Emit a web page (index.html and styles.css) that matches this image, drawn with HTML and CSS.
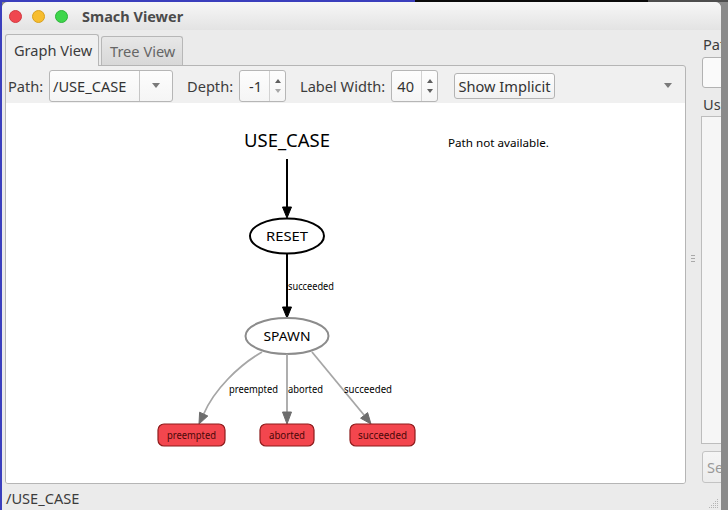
FILE: index.html
```html
<!DOCTYPE html>
<html>
<head>
<meta charset="utf-8">
<title>Smach Viewer</title>
<link rel="stylesheet" href="styles.css">
</head>
<body>
<div class="window">
  <div class="titlebar">
    <span class="light close"></span>
    <span class="light min"></span>
    <span class="light max"></span>
    <span class="title">Smach Viewer</span>
  </div>
  <div class="main">
    <div class="tabwidget">
      <div class="tabbar">
        <div class="tab active">Graph View</div>
        <div class="tab inactive">Tree View</div>
      </div>
      <div class="pane">
        <div class="toolbar">
          <span class="lbl lbl-path">Path:</span>
          <div class="combo">
            <span class="combo-text">/USE_CASE</span>
            <span class="combo-btn"><span class="tri-down"></span></span>
          </div>
          <span class="lbl lbl-depth">Depth:</span>
          <div class="spin">
            <span class="spin-text">-1</span>
            <span class="spin-arrows"><span class="tri-up"></span><span class="tri-dn dim"></span></span>
          </div>
          <span class="lbl lbl-width">Label Width:</span>
          <div class="spin">
            <span class="spin-text">40</span>
            <span class="spin-arrows"><span class="tri-up"></span><span class="tri-dn"></span></span>
          </div>
          <div class="btn-implicit">Show Implicit</div>
          <span class="tri-down tb-arrow"></span>
        </div>
        <div class="graph">
          <svg class="graph-svg" width="679" height="380" viewBox="6 103 679 380" xmlns="http://www.w3.org/2000/svg">
            <text x="287" y="147" text-anchor="middle" font-size="18" textLength="86" lengthAdjust="spacingAndGlyphs" class="g-text">USE_CASE</text>
            <text x="448" y="147" font-size="11.5" textLength="101" lengthAdjust="spacingAndGlyphs" class="g-text">Path not available.</text>

            <line x1="287" y1="159" x2="287" y2="208" stroke="#000" stroke-width="2"/>
            <polygon points="282.5,207 291.5,207 287,218" fill="#000" stroke="#000" stroke-width="1"/>

            <ellipse cx="287" cy="236" rx="37" ry="17.5" fill="#fff" stroke="#000" stroke-width="2"/>
            <text x="287" y="241" text-anchor="middle" font-size="13" textLength="42" lengthAdjust="spacingAndGlyphs" class="g-text">RESET</text>

            <line x1="287" y1="254" x2="287" y2="308" stroke="#000" stroke-width="2"/>
            <polygon points="282.5,307 291.5,307 287,318" fill="#000" stroke="#000" stroke-width="1"/>
            <text x="288" y="290" font-size="10" textLength="46" lengthAdjust="spacingAndGlyphs" class="g-text">succeeded</text>

            <ellipse cx="287" cy="336" rx="41.5" ry="18" fill="#fff" stroke="#8c8c8c" stroke-width="2"/>
            <text x="287" y="341" text-anchor="middle" font-size="13" textLength="47" lengthAdjust="spacingAndGlyphs" class="g-text">SPAWN</text>

            <path d="M262,352 C238,366 214,390 203.7,414" fill="none" stroke="#a6a6a6" stroke-width="1.8"/>
            <polygon points="199,424 207.8,416 199.6,412.2" fill="#6d6d6d" stroke="#6d6d6d" stroke-width="1"/>
            <text x="229" y="393" font-size="10" textLength="49" lengthAdjust="spacingAndGlyphs" class="g-text">preempted</text>

            <line x1="287" y1="354" x2="287" y2="413" stroke="#a6a6a6" stroke-width="1.8"/>
            <polygon points="282.5,412 291.5,412 287,424" fill="#6d6d6d" stroke="#6d6d6d" stroke-width="1"/>
            <text x="288" y="393" font-size="10" textLength="35" lengthAdjust="spacingAndGlyphs" class="g-text">aborted</text>

            <line x1="312" y1="352" x2="364" y2="415" stroke="#a6a6a6" stroke-width="1.8"/>
            <polygon points="371,424 367.6,412.6 360.6,418.2" fill="#6d6d6d" stroke="#6d6d6d" stroke-width="1"/>
            <text x="344" y="393" font-size="10" textLength="48" lengthAdjust="spacingAndGlyphs" class="g-text">succeeded</text>

            <rect x="158" y="424" width="67" height="22" rx="6" fill="#f3464e" stroke="#8e1b1b" stroke-width="1.2"/>
            <text x="191.5" y="439" text-anchor="middle" font-size="10" textLength="49" lengthAdjust="spacingAndGlyphs" class="g-box-text">preempted</text>
            <rect x="260" y="424" width="54" height="22" rx="6" fill="#f3464e" stroke="#8e1b1b" stroke-width="1.2"/>
            <text x="287" y="439" text-anchor="middle" font-size="10" textLength="36" lengthAdjust="spacingAndGlyphs" class="g-box-text">aborted</text>
            <rect x="350" y="424" width="65" height="22" rx="6" fill="#f3464e" stroke="#8e1b1b" stroke-width="1.2"/>
            <text x="382.5" y="439" text-anchor="middle" font-size="10" textLength="49" lengthAdjust="spacingAndGlyphs" class="g-box-text">succeeded</text>
          </svg>
        </div>
      </div>
    </div>
    <div class="splitter"><span class="grip"></span></div>
    <div class="side">
      <div class="side-label">Path:</div>
      <div class="side-field"></div>
      <div class="side-label side-label-2">UserData:</div>
      <div class="side-area"></div>
      <div class="side-btn">Set as initial state</div>
    </div>
  </div>
  <div class="statusbar">
    <span class="status-text">/USE_CASE</span>
    <svg class="size-grip" width="10" height="10" viewBox="0 0 10 10" xmlns="http://www.w3.org/2000/svg">
      <g fill="#b4b4b4">
        <rect x="8" y="0" width="1" height="1"/>
        <rect x="6" y="2" width="1" height="1"/><rect x="8" y="2" width="1" height="1"/>
        <rect x="4" y="4" width="1" height="1"/><rect x="6" y="4" width="1" height="1"/><rect x="8" y="4" width="1" height="1"/>
        <rect x="2" y="6" width="1" height="1"/><rect x="4" y="6" width="1" height="1"/><rect x="6" y="6" width="1" height="1"/><rect x="8" y="6" width="1" height="1"/>
        <rect x="0" y="8" width="1" height="1"/><rect x="2" y="8" width="1" height="1"/><rect x="4" y="8" width="1" height="1"/><rect x="6" y="8" width="1" height="1"/><rect x="8" y="8" width="1" height="1"/>
      </g>
    </svg>
  </div>
</div>
</body>
</html>
```

FILE: styles.css
```css
html, body {
  margin: 0;
  padding: 0;
}

body {
  width: 728px;
  height: 510px;
  overflow: hidden;
  font-family: "Noto Sans", "DejaVu Sans", sans-serif;
  background:
    linear-gradient(to right, #3b3fbd 0 415px, #0b0b0b 415px 648px, #4e4e4e 648px) top left / 100% 2px no-repeat,
    linear-gradient(to right, #3b3fbd 0 2px, #8a8a8a 2px);
}

.window {
  margin: 2px 0 0 2px;
  width: 719px;
  height: 508px;
  background: #ebebeb;
  border-radius: 6px 6px 0 0;
  overflow: hidden;
  display: flex;
  flex-direction: column;
  color: #3c3c3c;
  font-size: 14.6px;
}

/* Title bar */
.titlebar {
  height: 28px;
  flex: none;
  display: flex;
  align-items: center;
  gap: 10px;
  padding-left: 7px;
  background: linear-gradient(#f7f7f7, #e3e3e3);
}

.light {
  width: 13px;
  height: 13px;
  border-radius: 50%;
  box-sizing: border-box;
  flex: none;
}

.close { background: #f0474f; border: 1px solid #d23a41; }
.min { background: #f7bd2e; border: 1px solid #d8a01d; }
.max { background: #3ed64b; border: 1px solid #2db33a; }

.title {
  margin-left: 4px;
  font-weight: bold;
  font-size: 14.5px;
  color: #4b4b4b;
}

/* Main area */
.main {
  flex: 1;
  display: flex;
  min-height: 0;
}

.tabwidget {
  margin-left: 3px;
  width: 681px;
  flex: none;
  display: flex;
  flex-direction: column;
  padding-top: 4px;
  padding-bottom: 2px;
  box-sizing: border-box;
}

.tabbar {
  height: 31px;
  flex: none;
  display: flex;
  align-items: flex-end;
  gap: 2px;
  position: relative;
  z-index: 1;
}

.tab {
  box-sizing: border-box;
  border: 1px solid #b7b7b7;
  border-bottom: none;
  border-radius: 3px 3px 0 0;
  white-space: nowrap;
}

.tab.active {
  width: 94px;
  height: 32px;
  margin-bottom: -1px;
  padding-left: 8px;
  background: #f0f0f0;
  line-height: 30px;
  color: #3c3c3c;
}

.tab.inactive {
  width: 82px;
  height: 29px;
  padding-left: 8px;
  background: linear-gradient(#e7e7e7, #d8d8d8);
  line-height: 28px;
  color: #666;
}

.pane {
  flex: 1;
  border: 1px solid #b5b5b5;
  border-radius: 0 3px 3px 3px;
  background: #f0f0f0;
  display: flex;
  flex-direction: column;
  overflow: hidden;
}

.toolbar {
  height: 37px;
  box-sizing: border-box;
  padding-top: 2px;
  flex: none;
  display: flex;
  align-items: center;
  white-space: nowrap;
}

.lbl { flex: none; }
.lbl-path { margin-left: 2px; width: 41px; }
.lbl-depth { margin-left: 14px; width: 52px; }
.lbl-width { margin-left: 14px; width: 91px; }

.combo {
  width: 124px;
  height: 32px;
  flex: none;
  box-sizing: border-box;
  border: 1px solid #b6b6b6;
  border-radius: 3px;
  background: linear-gradient(#fdfdfd, #f5f5f5);
  display: flex;
}

.combo-text {
  flex: 1;
  padding-left: 3px;
  line-height: 30px;
  color: #333;
}

.combo-btn {
  width: 32px;
  border-left: 1px solid #c6c6c6;
  display: flex;
  align-items: center;
  justify-content: center;
}

.tri-down {
  width: 0;
  height: 0;
  border-left: 4px solid transparent;
  border-right: 4px solid transparent;
  border-top: 5px solid #7a7a7a;
}

.spin {
  width: 47px;
  height: 32px;
  flex: none;
  box-sizing: border-box;
  border: 1px solid #b6b6b6;
  border-radius: 3px;
  background: linear-gradient(#fdfdfd, #f5f5f5);
  display: flex;
}

.spin-text {
  flex: 1;
  text-align: right;
  padding-right: 7px;
  line-height: 30px;
  color: #333;
}

.spin-arrows {
  width: 15px;
  border-left: 1px solid #d2d2d2;
  display: flex;
  flex-direction: column;
  align-items: center;
  justify-content: center;
  gap: 6px;
}

.tri-up {
  width: 0;
  height: 0;
  border-left: 3.5px solid transparent;
  border-right: 3.5px solid transparent;
  border-bottom: 4px solid #5e5e5e;
}

.tri-dn {
  width: 0;
  height: 0;
  border-left: 3.5px solid transparent;
  border-right: 3.5px solid transparent;
  border-top: 4px solid #5e5e5e;
}

.tri-dn.dim { border-top-color: #a8a8a8; }

.btn-implicit {
  margin-left: 16px;
  width: 101px;
  height: 26px;
  flex: none;
  box-sizing: border-box;
  border: 1px solid #b3b3b3;
  border-radius: 3px;
  background: linear-gradient(#fdfdfd, #f1f1f1);
  text-align: center;
  line-height: 24px;
  color: #333;
}

.tb-arrow {
  margin-left: auto;
  margin-right: 13px;
  flex: none;
}

.graph {
  flex: 1;
  background: #fff;
  overflow: hidden;
}

.graph-svg { display: block; }

.g-text {
  font-family: "Noto Sans", "DejaVu Sans", sans-serif;
  fill: #000;
}

.g-box-text {
  font-family: "Noto Sans", "DejaVu Sans", sans-serif;
  fill: #4a0808;
}

/* Splitter */
.splitter {
  width: 14px;
  flex: none;
  display: flex;
  align-items: center;
  justify-content: center;
}

.grip {
  width: 4px;
  height: 7px;
  background: repeating-linear-gradient(#a9a9a9 0 1px, transparent 1px 3px);
}

/* Side panel */
.side {
  flex: 1;
  min-width: 0;
  padding-left: 2px;
  display: flex;
  flex-direction: column;
  white-space: nowrap;
}

.side-label {
  margin-top: 4px;
  padding-left: 1px;
  line-height: 20px;
  color: #3c3c3c;
}

.side-label-2 { margin-top: 6px; }

.side-field {
  margin-top: 3px;
  width: 80px;
  height: 31px;
  flex: none;
  box-sizing: border-box;
  border: 1px solid #b2b2b2;
  border-radius: 3px;
  background: #fafafa;
}

.side-area {
  margin-top: 2px;
  margin-left: -1px;
  width: 80px;
  height: 328px;
  flex: none;
  box-sizing: border-box;
  border: 1px solid #bdbdbd;
  background: #f6f6f6;
}

.side-btn {
  margin-top: 7px;
  width: 140px;
  height: 32px;
  flex: none;
  box-sizing: border-box;
  border: 1px solid #c3c3c3;
  border-radius: 3px;
  background: linear-gradient(#f5f5f5, #ececec);
  color: #9a9a9a;
  line-height: 30px;
  padding-left: 4px;
}

/* Status bar */
.statusbar {
  height: 24px;
  flex: none;
  display: flex;
  padding-left: 4px;
  padding-top: 1px;
  box-sizing: border-box;
  line-height: 22px;
  color: #3c3c3c;
}

.size-grip {
  margin-left: auto;
  margin-right: 2px;
  align-self: flex-end;
  margin-bottom: 1px;
}
```
